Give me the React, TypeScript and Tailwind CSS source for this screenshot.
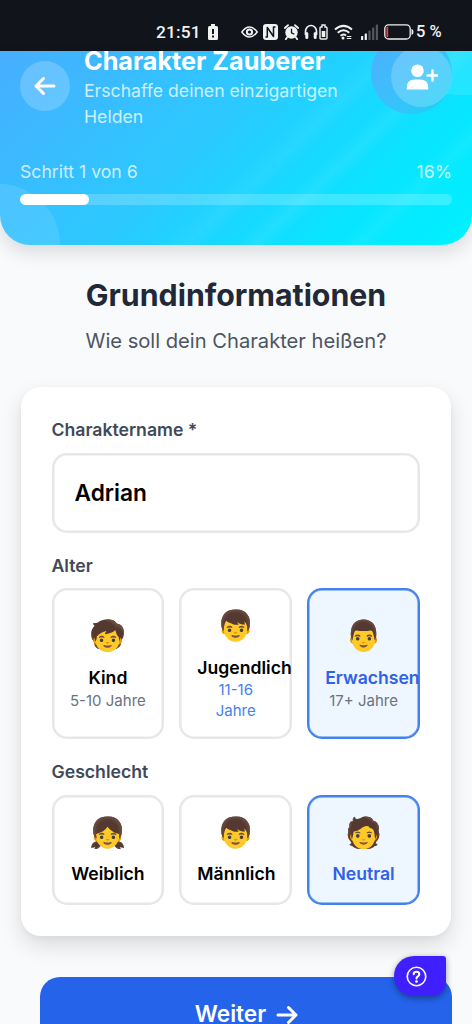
import React from "react";

function Option({ face, label, detail, selected, accentDetail, tall }: {
  face: string;
  label: string;
  detail?: string;
  selected?: boolean;
  accentDetail?: boolean;
  tall?: boolean;
}) {
  return (
    <button
      className={`flex min-w-0 flex-col justify-center rounded-[15px] border-2 px-[16px] text-center ${
        selected
          ? "border-[#4382ee] bg-[#eef6ff] text-[#2f62e6] shadow-[inset_0_0_0_0.5px_#4382ee]"
          : "border-[#e5e7eb] bg-white text-black shadow-[inset_0_0_0_0.5px_#e5e7eb]"
      } ${tall ? "h-[151px]" : "h-[110px] pb-[1px]"}`}
    >
      <div className={`mb-[10px] h-[39px] w-full text-[29.800px] ${tall ? "leading-[39px]" : "leading-[40px]"}`}>{face}</div>
      <div className="w-full text-[17.600px] leading-[25.600px] font-semibold">{label}</div>
      {detail && (
        <div className={`w-full text-[15px] leading-[20.400px] ${accentDetail ? "text-[#4382ee]" : "text-[#6b7280]"}`}>
          {detail}
        </div>
      )}
    </button>
  );
}

function StatusBar() {
  return (
    <div className="flex h-[51px] shrink-0 items-start bg-[#11141b] pt-[22px] pl-[156px] text-[#f1f1f2]">
      <div className="flex h-[20px] items-center">
        <span className="w-[52px] pt-[1px] font-['Roboto',sans-serif] text-[17.300px] font-medium tracking-[0.200px]">21:51</span>
        <svg className="h-[16px] w-[10px]" viewBox="0 0 10 16">
          <path d="M3 0h4v2h1.500Q10 2 10 3.500v11Q10 16 8.500 16h-7Q0 16 0 14.500v-11Q0 2 1.500 2H3Z" fill="currentColor" />
          <path d="M4 5h2v5H4ZM4 11.500h2v2H4Z" fill="#11141b" />
        </svg>
        <svg className="ml-[23px] h-[12px] w-[17px]" viewBox="0 0 17 12" fill="none" stroke="currentColor">
          <path d="M.8 6Q4.500 1 8.500 1T16.200 6Q12.500 11 8.500 11T.8 6Z" strokeWidth="1.500" />
          <circle cx="8.500" cy="6" r="2.600" strokeWidth="2" />
        </svg>
        <svg className="ml-[5px] h-[16px] w-[15px]" viewBox="0 0 15 16">
          <rect width="15" height="16" rx="3" fill="currentColor" />
          <path d="M2.500 13H4.300V3.500L10.500 12.500V3H12.500" fill="none" stroke="#11141b" strokeWidth="1.500" strokeLinejoin="round" />
        </svg>
        <svg className="ml-[6px] h-[16px] w-[15px]" viewBox="0 0 15 16">
          <path d="M.8 4L4 1.200M14.200 4L11 1.200M3 13.500L1.800 15.300M12 13.500l1.200 1.800" stroke="currentColor" strokeWidth="1.800" strokeLinecap="round" />
          <circle cx="7.500" cy="8.500" r="6.200" fill="currentColor" />
          <path d="M7.500 4.800v4l2.800 1.500" fill="none" stroke="#11141b" strokeWidth="1.300" />
        </svg>
        <svg className="ml-[5px] h-[16px] w-[14px]" viewBox="0 0 14 16" fill="none" stroke="currentColor">
          <path d="M1.500 11V7.500a5.500 6 0 0 1 11 0V11" strokeWidth="1.700" />
          <path d="M2.800 9.500v4M11.200 9.500v4" strokeWidth="3" strokeLinecap="round" />
        </svg>
        <svg className="ml-[1px] h-[16px] w-[9px]" viewBox="0 0 9 16">
          <path d="M3 1h3v2h1q1 0 1 1v10q0 1-1 1H2q-1 0-1-1V4q0-1 1-1h1Z" fill="none" stroke="currentColor" strokeWidth="1.400" />
          <rect x="2.700" y="7" width="3.600" height="6" fill="currentColor" />
        </svg>
        <svg className="ml-[6px] h-[16px] w-[19px]" viewBox="0 0 19 16" fill="none" stroke="currentColor" strokeWidth="2">
          <path d="M1 5.500Q9.500-1.800 18 5.500M3.700 8.700Q9.500 3.700 15.300 8.700M6.500 11.800Q9.500 9.400 12 11.500" />
          <circle cx="9" cy="14" r="1.500" fill="currentColor" stroke="none" />
          <path d="M12.800 12.500h4.500M12.800 14.500h4.500" strokeWidth="1.200" />
        </svg>
        <svg className="ml-[8px] h-[16px] w-[17px]" viewBox="0 0 17 16" fill="currentColor">
          <rect y="12" width="2.200" height="4" rx=".6" />
          <rect x="3.700" y="9.500" width="2.200" height="6.500" rx=".6" />
          <g opacity=".3">
            <rect x="7.400" y="6.500" width="2.200" height="9.500" rx=".6" />
            <rect x="11.100" y="3.500" width="2.200" height="12.500" rx=".6" />
            <rect x="14.800" y=".5" width="2.200" height="15.500" rx=".6" />
          </g>
        </svg>
        <svg className="ml-[6px] h-[16px] w-[30px]" viewBox="0 0 30 16">
          <rect x=".8" y=".8" width="25.400" height="14.200" rx="3.800" fill="none" stroke="currentColor" strokeWidth="1.300" />
          <rect x="2.400" y="2.800" width="1.800" height="10.200" rx=".6" fill="#e94144" />
          <path d="M27.500 5q2 .2 2 3t-2 3Z" fill="currentColor" />
        </svg>
        <span className="ml-[2px] pt-[1px] font-['Roboto',sans-serif] text-[16.500px] font-medium whitespace-nowrap">5 %</span>
      </div>
    </div>
  );
}

function WizardHeader() {
  return (
    <header className="relative h-[194px] shrink-0 overflow-hidden rounded-b-[30px] bg-[linear-gradient(135deg,#48aeff_0%,#2cc9ff_43%,#08e5ff_78%,#00f2ff_100%)] text-white">
      <div className="absolute inset-0 bg-[linear-gradient(137deg,transparent_54%,#ffffff0c_58%,transparent_61%,transparent_65%,#ffffff10_68%,transparent_71%,transparent_80%,#ffffff0c_83%,transparent_86%)]" />
      <div className="absolute -top-[120px] -right-[72px] h-[164px] w-[164px] rounded-full bg-white/10" />
      <div className="absolute -bottom-[61px] -left-[62px] h-[122px] w-[122px] rounded-full bg-white/10" />
      <div className="absolute -top-[18px] left-[371px] h-[81px] w-[81px] rounded-full bg-linear-to-br from-[#4facfe] to-[#0cd2f6]" />
      <div className="relative flex h-full flex-col px-[20px]">
        <div className="flex items-start">
          <button className="mt-[10px] flex h-[50px] w-[50px] shrink-0 items-center justify-center rounded-full bg-white/20">
            <svg viewBox="0 0 22 20" className="h-[20px] w-[22px]" fill="none" stroke="currentColor" strokeWidth="3" strokeLinecap="round" strokeLinejoin="round">
              <path d="M20 10H2M9.500 2.500L2 10l7.500 7.500" />
            </svg>
          </button>
          <div className="-mt-[6px] ml-[14px] w-[285px]">
            <h1 className="text-[25.200px] leading-[33px] font-bold whitespace-nowrap">Charakter Zauberer</h1>
            <p className="text-[17.650px] leading-[25.500px] text-white/75">Erschaffe deinen einzigartigen Helden</p>
          </div>
          <div className="-mt-[5px] ml-auto flex h-[61px] w-[61px] shrink-0 items-center justify-center rounded-full bg-white/20">
            <svg viewBox="0 0 32 26" className="h-[26px] w-[32px]" fill="currentColor">
              <circle cx="11.500" cy="6.800" r="6.300" />
              <path d="M.8 25.500v-2.200Q.8 15.500 9 15.500h5q8.200 0 8.200 7.800v2.200Z" />
              <path d="M26.500 6.500v10M21.500 11.500h10" stroke="currentColor" strokeWidth="2.400" strokeLinecap="round" />
            </svg>
          </div>
        </div>
        <div className="mt-[30px] flex justify-between text-[17.650px] leading-[26px] text-white/75">
          <span>Schritt 1 von 6</span>
          <span>16%</span>
        </div>
        <div className="mt-[9px] h-[11px] overflow-hidden rounded-full bg-white/20">
          <div className="h-full w-[16%] rounded-full bg-white" />
        </div>
      </div>
    </header>
  );
}

export default function App() {
  return (
    <div className="relative flex h-[1024px] w-[472px] flex-col overflow-hidden bg-[#f9fafc] font-['Inter',sans-serif]">
      <StatusBar />
      <div className="shrink-0 rounded-b-[30px] shadow-[0_8px_18px_rgba(0,0,0,0.12)]">
        <WizardHeader />
      </div>
      <main className="shrink-0 px-[20px]">
        <div className="pt-[30px] text-center">
          <h2 className="text-[30.300px] leading-[41px] font-bold text-[#1f2937]">Grundinformationen</h2>
          <p className="mt-[10px] text-[20.150px] leading-[30px] text-[#4b5563]">Wie soll dein Charakter heißen?</p>
        </div>
        <section className="mt-[31px] mr-px ml-[0.500px] h-[549px] rounded-[20px] bg-white px-[31px] pt-[31px] shadow-[0_10px_22px_rgba(0,0,0,0.12),0_2px_6px_rgba(0,0,0,0.04)]">
          <div className="mb-[11px] text-[17.650px] leading-[24px] font-semibold text-[#414958]">Charaktername *</div>
          <input
            defaultValue="Adrian"
            className="block h-[80px] w-full rounded-[15px] border-2 border-[#e5e7eb] bg-white px-[21px] pb-[2px] text-[22.700px] font-semibold text-black shadow-[inset_0_0_0_0.5px_#e5e7eb] outline-none"
          />
          <div className="mt-[20px] mb-[10px] text-[17.650px] leading-[25px] font-semibold text-[#414958]">Alter</div>
          <div className="grid grid-cols-3 gap-[15px]">
            <Option face="🧒" label="Kind" detail="5-10 Jahre" tall />
            <Option face="👦" label="Jugendlich" detail="11-16 Jahre" accentDetail tall />
            <Option face="👨" label="Erwachsen" detail="17+ Jahre" selected tall />
          </div>
          <div className="mt-[20px] mb-[11px] text-[17.650px] leading-[25px] font-semibold text-[#414958]">Geschlecht</div>
          <div className="grid grid-cols-3 gap-[15px]">
            <Option face="👧" label="Weiblich" />
            <Option face="👦" label="Männlich" />
            <Option face="🧑" label="Neutral" selected />
          </div>
        </section>
        <button className="mt-[41px] ml-[20px] flex h-[75px] w-[412px] items-center justify-center gap-[10px] rounded-[20px] bg-[#2563eb] pl-[1px] text-[22.700px] font-semibold text-white">
          Weiter
          <svg viewBox="0 0 22 20" className="h-[20px] w-[22px]" fill="none" stroke="currentColor" strokeWidth="3" strokeLinecap="round" strokeLinejoin="round">
            <path d="M2 10h18M12.500 2.500L20 10l-7.500 7.500" />
          </svg>
        </button>
      </main>
      <button className="absolute top-[956px] left-[394px] flex h-[40px] w-[52px] items-center rounded-[20px] rounded-tr-[3px] rounded-br-[14px] bg-[#401fff] pl-[12px] text-white shadow-[0_2px_6px_rgba(0,0,0,0.4)]">
        <svg viewBox="0 0 22 22" className="h-[21px] w-[21px]" fill="none" stroke="currentColor" strokeLinecap="round">
          <circle cx="11" cy="11" r="9.700" strokeWidth="1.700" />
          <path d="M8 8.500Q8.300 6 11 6T14 8.500Q14 10 12.500 10.900Q11 11.800 11 13" strokeWidth="2.200" />
          <circle cx="11" cy="16.200" r="1.400" fill="currentColor" stroke="none" />
        </svg>
      </button>
    </div>
  );
}
